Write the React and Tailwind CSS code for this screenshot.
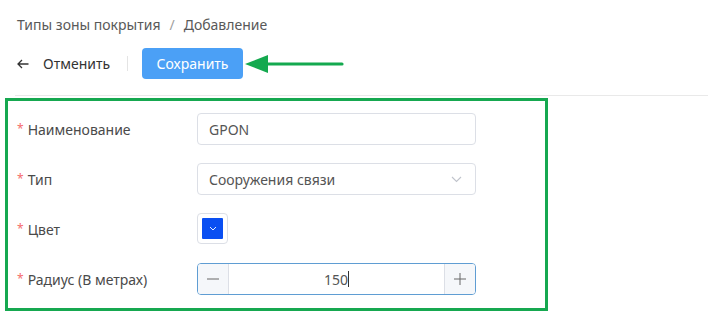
import React from "react";

const Label = ({ children }) => (
  <div className="w-[180px] shrink-0 flex items-center text-[#4a4a4a]">
    <span className="text-[#f56c6c] text-[12px] mr-[4px]">*</span>
    {children}
  </div>
);

const App = () => {
  return (
    <div className="w-[708px] h-[324px] bg-white overflow-hidden font-['Noto_Sans',sans-serif] text-[14px] text-[#595959]">
      <div className="pl-[17px] pt-[14px] leading-[22px] flex items-center">
        <span>Типы зоны покрытия</span>
        <span className="mx-[9px] text-[#a0a0a0]">/</span>
        <span>Добавление</span>
      </div>

      <div className="flex items-center pl-[17px] mt-[12px] h-[31px]">
        <svg width="12" height="10" viewBox="0 0 12 10" fill="none" stroke="#333" strokeWidth="1.3">
          <path d="M11.5 5H1M5 1L1 5l4 4" />
        </svg>
        <span className="ml-[14px] text-[#333]">Отменить</span>
        <div className="ml-[17px] w-px h-[15px] bg-[#e4e4e4]" />
        <button className="ml-[14px] w-[101px] h-[31px] rounded-[4px] bg-[#4ba0f6] text-white">
          Сохранить
        </button>
        <svg className="ml-[1px]" width="100" height="22" viewBox="0 0 100 22">
          <path d="M1 11L24 2v18z" fill="#14a94f" />
          <path d="M22 11H98" stroke="#14a94f" strokeWidth="3.2" strokeLinecap="round" />
        </svg>
      </div>

      <div className="ml-[15px] mt-[16px] h-px bg-[#e9e9e9]" />

      <div className="ml-[5px] mt-[2px] w-[543px] h-[213px] border-[3px] border-[#16a850] pl-[9px] pt-[12px] flex flex-col gap-[18px]">
        <div className="flex h-[32px]">
          <Label>Наименование</Label>
          <div className="w-[279px] h-[32px] border border-[#dcdfe6] rounded-[4px] pl-[11px] flex items-center text-[#555]">
            GPON
          </div>
        </div>

        <div className="flex h-[32px]">
          <Label>Тип</Label>
          <div className="w-[279px] h-[32px] border border-[#dcdfe6] rounded-[4px] pl-[11px] pr-[13px] flex items-center justify-between text-[#555]">
            <span>Сооружения связи</span>
            <svg width="11" height="7" viewBox="0 0 11 7" fill="none" stroke="#c0c4cc" strokeWidth="1.1">
              <path d="M1 1l4.5 4.5L10 1" />
            </svg>
          </div>
        </div>

        <div className="flex h-[32px]">
          <Label>Цвет</Label>
          <div className="w-[31px] h-[31px] border border-[#dcdfe6] rounded-[4px] flex items-center justify-center">
            <div className="w-[21px] h-[21px] bg-[#0a4ff2] rounded-[1px] flex items-center justify-center">
              <svg width="8" height="5" viewBox="0 0 8 5" fill="none" stroke="#fff" strokeWidth="0.9">
                <path d="M1 1l3 3 3-3" />
              </svg>
            </div>
          </div>
        </div>

        <div className="flex h-[32px]">
          <Label>Радиус (В метрах)</Label>
          <div className="w-[279px] h-[32px] border border-[#5f9dd3] rounded-[4px] flex overflow-hidden">
            <div className="w-[31px] bg-[#f5f7fa] border-r border-[#dcdfe6] flex items-center justify-center">
              <svg width="12" height="2" viewBox="0 0 12 2">
                <path d="M0 1h12" stroke="#666" strokeWidth="1" />
              </svg>
            </div>
            <div className="flex-1 flex items-center justify-center text-[#555]">
              <span>150</span>
              <span className="w-px h-[16px] bg-[#333]" />
            </div>
            <div className="w-[31px] bg-[#f5f7fa] border-l border-[#dcdfe6] flex items-center justify-center">
              <svg width="12" height="12" viewBox="0 0 12 12">
                <path d="M0 6h12M6 0v12" stroke="#666" strokeWidth="1" />
              </svg>
            </div>
          </div>
        </div>
      </div>
    </div>
  );
};

export default App;
